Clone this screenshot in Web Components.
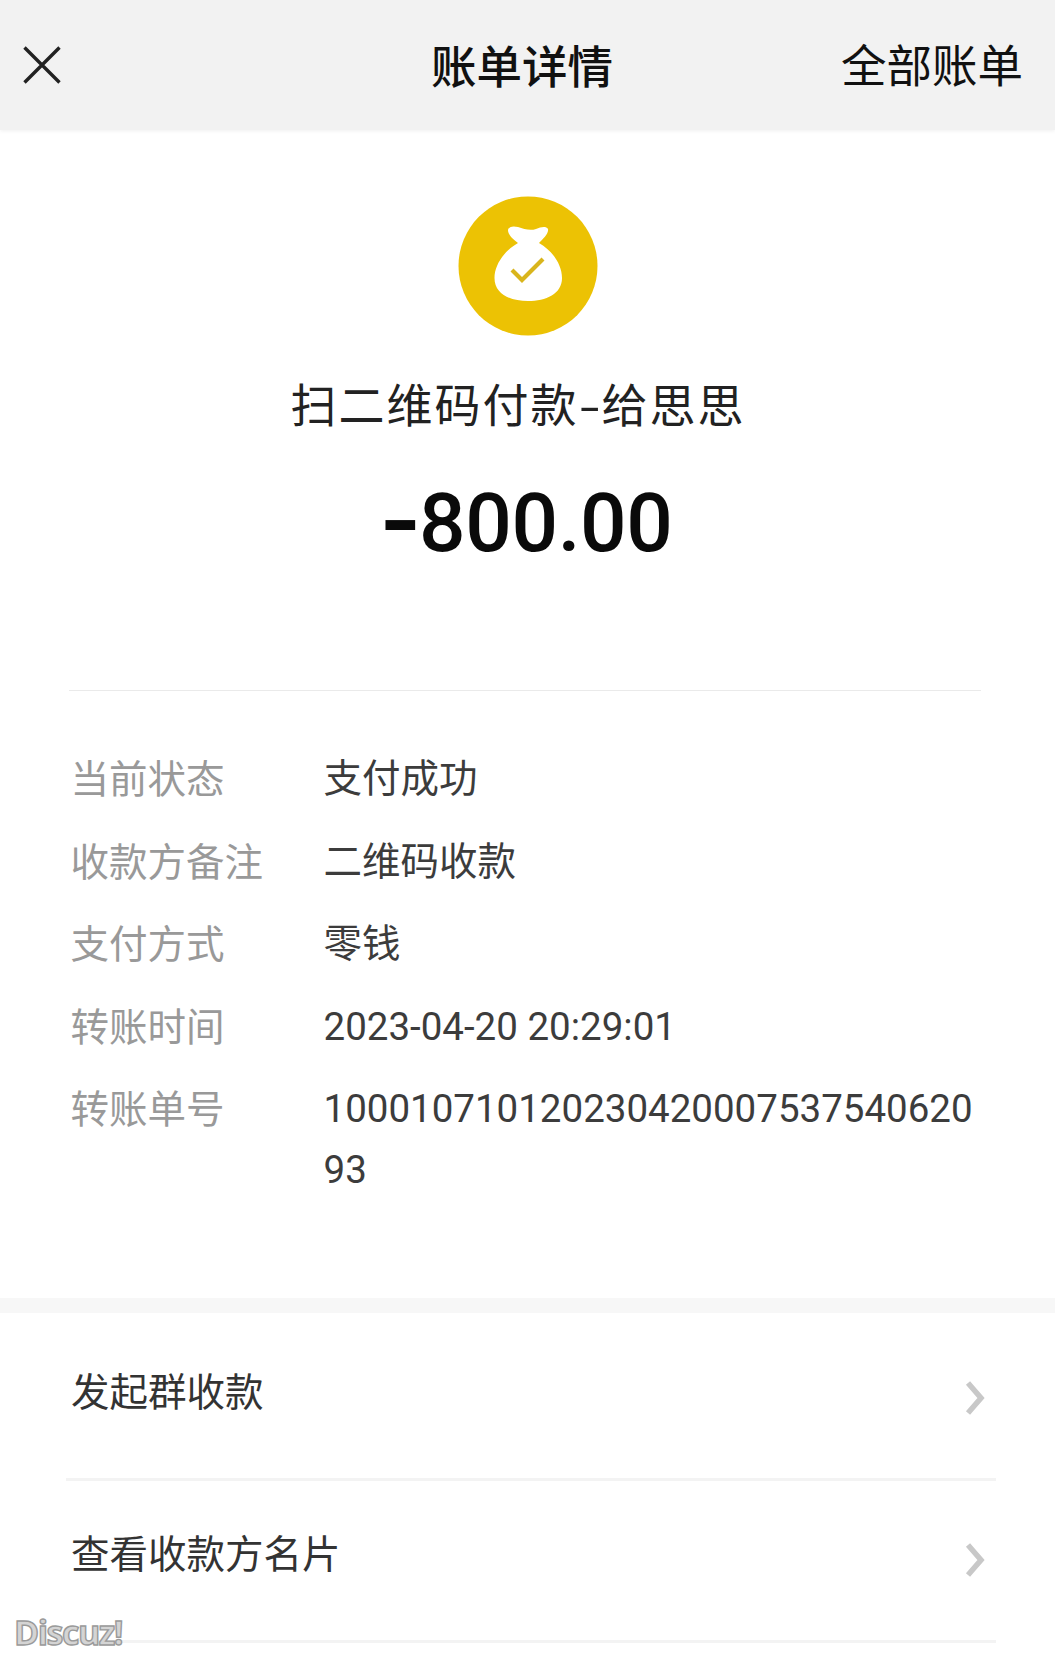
<!DOCTYPE html>
<html lang="zh">
<head>
<meta charset="utf-8">
<title>账单详情</title>
<style>
html, body { margin: 0; background: #fff; }
body { width: 1055px; height: 1657px; overflow: hidden; position: relative; font-family: "Noto Sans CJK SC", "Noto Sans", sans-serif; }
link-row:first-of-type { margin-top: 6px; }
</style>
</head>
<body>
<bill-header></bill-header>
<bill-summary></bill-summary>
<bill-details>
  <detail-row label="当前状态">支付成功</detail-row>
  <detail-row label="收款方备注">二维码收款</detail-row>
  <detail-row label="支付方式">零钱</detail-row>
  <detail-row label="转账时间">2023-04-20 20:29:01</detail-row>
  <detail-row label="转账单号">100010710120230420007537540620 93</detail-row>
</bill-details>
<link-row>发起群收款</link-row>
<link-row>查看收款方名片</link-row>
<water-mark></water-mark>

<script>
class BillHeader extends HTMLElement {
  constructor() {
    super();
    this.attachShadow({ mode: 'open' }).innerHTML = `
<style>
:host { display: flex; align-items: center; justify-content: space-between; height: 130px; box-sizing: border-box; padding: 0 32px 0 23px; background: #f2f2f2; box-shadow: 0 1px 4px #f0f0f0; position: relative; color: #111; }
svg { width: 38px; height: 38px; display: block; }
.title { position: absolute; left: 431px; top: 36px; font-size: 45.500px; line-height: 56px; font-weight: 500; }
.all { font-size: 45.500px; line-height: 56px; margin-top: -4px; }
</style>
<svg viewBox="0 0 38 38"><path d="M1.5 1.5 36.500 36.500M36.500 1.500 1.500 36.500" fill="none" stroke="#222" stroke-width="3.400"/></svg>
<div class="title">账单详情</div>
<div class="all">全部账单</div>`;
  }
}

class BillSummary extends HTMLElement {
  constructor() {
    super();
    this.attachShadow({ mode: 'open' }).innerHTML = `
<style>
:host { display: flex; flex-direction: column; align-items: center; margin-left: 69px; width: 912px; height: 561px; box-sizing: border-box; padding: 66px 0 0 6px; border-bottom: 1px solid #eaeaea; color: #111; }
svg { width: 140px; height: 140px; display: block; }
.name { font-size: 46px; line-height: 64px; margin-top: 34px; margin-left: -20px; white-space: nowrap; color: #222; letter-spacing: 2px; }
.name .dash { display: inline-block; transform: scaleX(1.400); margin: 0 2px 0 3px; }
.amount { font-family: Roboto, "Liberation Sans", sans-serif; font-size: 82px; line-height: 94px; font-weight: 500; margin-top: 42px; margin-left: 8px; color: #0a0a0a; letter-spacing: -0.4px; white-space: nowrap; }
.amount .dash { display: inline-block; transform: scale(1.400, 1.300); transform-origin: 100% 60%; }
</style>
<svg viewBox="0 0 140 140">
  <circle cx="70" cy="70" r="69.500" fill="#ecc204"/>
  <path d="M50 34C51 30 56 30 60 31C66 33 72 35 78 33C83 31 88 30 90 33C91 37 85 43 81 47C95 55 104 69 104 82C104 98 88 105 70 105C52 105 36.500 98 36.500 82C36.500 69 46 55 60 47C55 43 50 39 50 34Z" fill="#fff"/>
  <path d="M54 74 64 84 85 63" fill="none" stroke="#d9b51c" stroke-width="4.200"/>
</svg>
<div class="name">扫二维码付款<span class="dash">-</span>给思思</div>
<div class="amount"><span class="dash">-</span>800.00</div>`;
  }
}

class BillDetails extends HTMLElement {
  constructor() {
    super();
    this.attachShadow({ mode: 'open' }).innerHTML = `
<style>
:host { display: flex; flex-direction: column; box-sizing: border-box; height: 622px; padding: 55px 0 0 70.500px; border-bottom: 15px solid #f7f7f7; }
</style>
<slot></slot>`;
  }
}

class DetailRow extends HTMLElement {
  constructor() {
    super();
    this.attachShadow({ mode: 'open' }).innerHTML = `
<style>
:host { display: grid; grid-template-columns: 253px 660px; font-size: 38.500px; line-height: 60.500px; padding-bottom: 22px; }
.label { color: #999; }
.value { color: #3c3c3c; font-family: Roboto, "Noto Sans CJK SC", sans-serif; word-break: break-word; margin-top: 3px; margin-bottom: -3px; }
</style>
<div class="label"></div>
<div class="value"><slot></slot></div>`;
    this.shadowRoot.querySelector('.label').textContent = this.getAttribute('label');
  }
}

class LinkRow extends HTMLElement {
  constructor() {
    super();
    this.attachShadow({ mode: 'open' }).innerHTML = `
<style>
:host { display: flex; justify-content: space-between; align-items: center; box-sizing: border-box; height: 162px; margin: 0 59px 0 66px; padding: 0 0 20px 5px; border-bottom: 3px solid #f3f3f3; font-size: 38.500px; line-height: 56px; color: #333; }
svg { width: 22px; height: 34px; display: block; margin: 18px 10px 0 0; }
</style>
<div><slot></slot></div>
<svg viewBox="0 0 22 34"><path d="M4 2 17 17 4 32" fill="none" stroke="#c8c8c8" stroke-width="5.500"/></svg>`;
  }
}

class WaterMark extends HTMLElement {
  constructor() {
    super();
    this.attachShadow({ mode: 'open' }).innerHTML = `
<style>
:host { position: absolute; left: 14px; top: 1610px; font-family: "Open Sans", "Liberation Sans", sans-serif; font-weight: 700; font-size: 34px; line-height: 44px; color: #d4d4d4; -webkit-text-stroke: 1.400px #9a9a9a; letter-spacing: -1.500px; }
</style>
Discuz!`;
  }
}

customElements.define('bill-header', BillHeader);
customElements.define('bill-summary', BillSummary);
customElements.define('bill-details', BillDetails);
customElements.define('detail-row', DetailRow);
customElements.define('link-row', LinkRow);
customElements.define('water-mark', WaterMark);
</script>
</body>
</html>
